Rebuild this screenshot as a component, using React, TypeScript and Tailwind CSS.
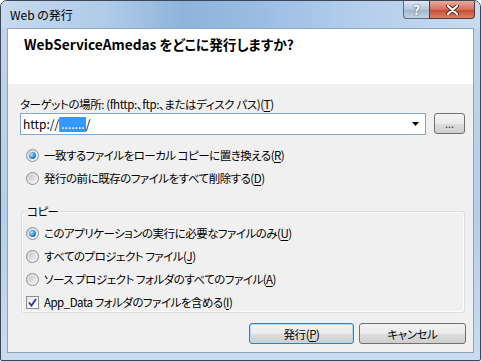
import React from "react";

const FONT = "font-['Noto_Sans_CJK_JP','Noto_Sans',sans-serif] [font-feature-settings:'palt']";

function Mn({ c }: { c: string }) {
  return (
    <>
      (<span className="underline underline-offset-[2px]">{c}</span>)
    </>
  );
}

function Radio({ checked }: { checked?: boolean }) {
  return (
    <span className="w-[13px] h-[13px] rounded-full border border-[#8e8f8f] bg-[linear-gradient(135deg,#d2d2d2,#fbfbfb)] flex items-center justify-center shrink-0">
      {checked ? (
        <span className="w-[7px] h-[7px] rounded-full bg-[radial-gradient(circle_at_35%_35%,#b4e6ff,#2a8ad8_55%,#0c4f93)]" />
      ) : (
        <span className="w-[7px] h-[7px] rounded-full bg-[linear-gradient(135deg,#c6c6c6,#f2f2f2)]" />
      )}
    </span>
  );
}

function Check() {
  return (
    <span className="w-[13px] h-[13px] border border-[#8e8f8f] bg-[linear-gradient(135deg,#e6e6e6,#ffffff)] flex items-center justify-center shrink-0">
      <svg width="9" height="9" viewBox="0 0 9 9">
        <path d="M1 4.5 L3.5 7.5 L8 1" fill="none" stroke="#26359b" strokeWidth="1.8" />
      </svg>
    </span>
  );
}

function Option({ checked, children, box }: { checked?: boolean; children: React.ReactNode; box?: boolean }) {
  return (
    <div className="flex items-center gap-[5px] h-[18px]">
      {box ? <Check /> : <Radio checked={checked} />}
      <span className="text-[11.5px] tracking-[-0.5px] leading-[18px] text-black whitespace-nowrap">{children}</span>
    </div>
  );
}

export default function App() {
  return (
    <div className={`w-[481px] h-[361px] ${FONT}`}>
      <div className="w-full h-full flex flex-col border border-[#3b4656] rounded-t-[7px] rounded-b-[2px] overflow-hidden bg-[linear-gradient(180deg,#c2d6ec,#b6cee9_60%,#c9dcf0)]">
        {/* Title bar */}
        <div className="h-[27px] flex items-start bg-[linear-gradient(90deg,#c6d9ef_0%,#b0cbe8_22%,#8fb3dc_38%,#9cbde3_55%,#b2cceb_72%,#c8dbf1_100%)]">
          <span className="pl-[9px] pt-[5px] text-[12px] leading-[18px] text-black">Web の発行</span>
          <div className="ml-auto mr-[5px] flex">
            <div className="w-[26px] h-[18px] rounded-bl-[4px] border border-[#5a6c82] border-t-0 border-r-0 bg-[linear-gradient(180deg,#dfe8f3,#b5c6da_50%,#9fb3cb_51%,#c5d4e5)] flex items-center justify-center text-white text-[13px] font-bold [text-shadow:0_0_2px_#2c3c52]">
              ?
            </div>
            <div className="w-[46px] h-[18px] rounded-br-[4px] border border-[#5a3a34] border-t-0 bg-[linear-gradient(180deg,#e9a99c,#d5705c_50%,#c24a30_51%,#d9826a)] flex items-center justify-center">
              <svg width="13" height="10" viewBox="0 0 13 10">
                <path d="M2 1 L11 9 M11 1 L2 9" stroke="#5b2418" strokeWidth="4" strokeLinecap="round" />
                <path d="M2 1 L11 9 M11 1 L2 9" stroke="#ffffff" strokeWidth="2.2" strokeLinecap="round" />
              </svg>
            </div>
          </div>
        </div>

        {/* Client */}
        <div className="flex-1 mx-[6px] mb-[7px] border border-[#8ea3bc] flex flex-col bg-[#f0f0f0]">
          <div className="h-[55px] bg-white pl-[16px] pt-[7px]">
            <p className="text-[13.7px] leading-[16px] font-bold text-black">WebServiceAmedas をどこに発行しますか?</p>
          </div>

          <div className="flex-1 pl-[12px] pt-[13px]">
            <p className="text-[11.5px] tracking-[-0.4px] leading-[14px] text-black whitespace-nowrap">
              ターゲットの場所: (fhttp:、ftp:、またはディスク パス)<Mn c="T" />
            </p>
            <div className="flex gap-[8px] mt-[2px]">
              <div className="w-[406px] h-[22px] border border-[#84a8d4] bg-white flex items-center pl-[2px]">
                <span className="text-[12px] leading-[16px] text-black">http://</span>
                <span className="h-[15px] border-l border-[#d88a2a] bg-[#3399ff] text-white text-[12px] leading-[14px] px-[1px]">.......</span>
                <span className="text-[12px] leading-[16px] text-black">/</span>
                <svg className="ml-auto mr-[5px]" width="8" height="5" viewBox="0 0 8 5">
                  <path d="M0 0 H7 L3.5 4 Z" fill="#000" />
                </svg>
              </div>
              <div className="w-[31px] h-[21px] rounded-[3px] border border-[#707070] bg-[linear-gradient(180deg,#f3f3f3,#ebebeb_50%,#dddddd_51%,#cfcfcf)] flex items-center justify-center text-[11px] leading-[10px] text-[#333] pb-[2px]">
                ...
              </div>
            </div>

            <div className="pl-[6px] mt-[11px] flex flex-col gap-[5px]">
              <Option checked>
                一致するファイルをローカル コピーに置き換える<Mn c="R" />
              </Option>
              <Option>
                発行の前に既存のファイルをすべて削除する<Mn c="D" />
              </Option>
            </div>

            <div className="relative ml-[1px] mt-[24px] w-[444px] border border-[#d5dfe5] rounded-[3px] pl-[4px] pt-[12px] pb-[1px] shadow-[inset_0_0_0_1px_#fafbfc]">
              <span className="absolute -top-[9px] left-[4px] px-[1px] bg-[#f0f0f0] text-[11.5px] tracking-[-0.5px] leading-[16px] text-black">コピー</span>
              <div className="flex flex-col gap-[5px]">
                <Option checked>
                  このアプリケーションの実行に必要なファイルのみ<Mn c="U" />
                </Option>
                <Option>
                  すべてのプロジェクト ファイル<Mn c="J" />
                </Option>
                <Option>
                  ソース プロジェクト フォルダのすべてのファイル<Mn c="A" />
                </Option>
                <Option box>
                  App_Data フォルダのファイルを含める<Mn c="I" />
                </Option>
              </div>
            </div>

            <div className="flex justify-end gap-[5px] mt-[10px] pr-[7px]">
              <div className="w-[105px] h-[21px] rounded-[3px] border border-[#3c7fb1] shadow-[inset_0_0_0_1px_#a8dcf8] bg-[linear-gradient(180deg,#f2f2f2,#ebebeb_50%,#dddddd_51%,#cfcfcf)] flex items-center justify-center text-[11.5px] tracking-[-0.4px] leading-[16px] text-black">
                発行<Mn c="P" />
              </div>
              <div className="w-[107px] h-[21px] rounded-[3px] border border-[#707070] bg-[linear-gradient(180deg,#f2f2f2,#ebebeb_50%,#dddddd_51%,#cfcfcf)] flex items-center justify-center text-[11.5px] tracking-[-0.4px] leading-[16px] text-black">
                キャンセル
              </div>
            </div>
          </div>
        </div>
      </div>
    </div>
  );
}
